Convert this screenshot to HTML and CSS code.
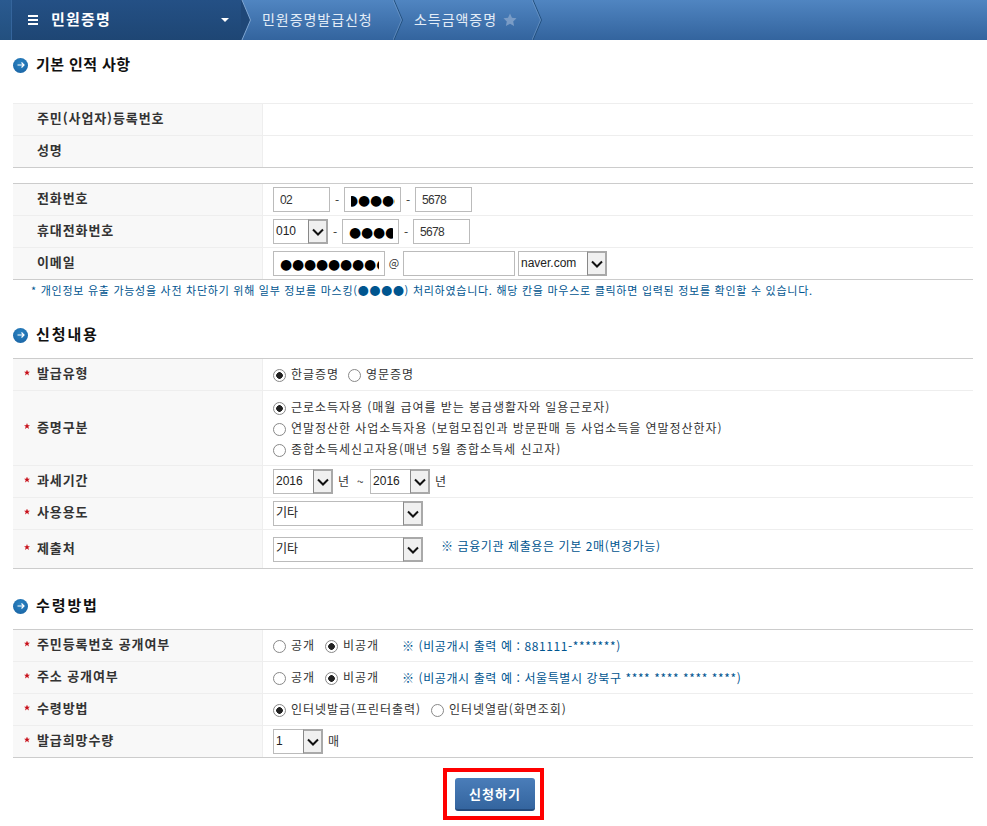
FILE: index.html
```html
<!DOCTYPE html>
<html lang="ko">
<head>
<meta charset="utf-8">
<title>소득금액증명</title>
<link rel="stylesheet" href="styles.css">
</head>
<body>
<header class="topbar">
  <div class="strip"></div>
  <div class="menu">
    <span class="burger"><i></i><i></i><i></i></span>
    <span class="menu-title">민원증명</span>
    <span class="caret"></span>
  </div>
  <svg class="tail" width="10" height="40" viewBox="0 0 10 40"><path d="M0 0H1L9.5 20L1 40H0Z" fill="#1f4777"/><path d="M1 0L9.5 20L1 40" fill="none" stroke="#7fa6d2"/></svg>
  <span class="crumb crumb-a">민원증명발급신청</span>
  <svg class="chev" width="10" height="40" viewBox="0 0 10 40"><path d="M1 0L9.5 20L1 40" fill="none" stroke="#23507f"/><path d="M0 0L8.5 20L0 40" fill="none" stroke="#7fa6d2" opacity=".5"/></svg>
  <span class="crumb crumb-b">소득금액증명</span>
  <svg class="star" width="14" height="14" viewBox="0 0 24 24"><path d="M12 1l3.4 7.2 7.8 1-5.7 5.4 1.5 7.8L12 18.6l-7 3.8 1.5-7.8L.8 9.2l7.8-1z" fill="#7a9cc6"/></svg>
  <svg class="chev chev-c" width="10" height="40" viewBox="0 0 10 40"><path d="M1 0L9.5 20L1 40" fill="none" stroke="#23507f"/><path d="M0 0L8.5 20L0 40" fill="none" stroke="#7fa6d2" opacity=".5"/></svg>
</header>

<main class="page">
  <h2 class="heading h-first"><span class="bullet"><svg width="8" height="8" viewBox="0 0 8 8"><path d="M0.5 4H7M4.5 1.5L7 4L4.5 6.5" fill="none" stroke="#fff" stroke-width="1.2"/></svg></span>기본 인적 사항</h2>
  <section class="table table-light">
    <div class="row"><div class="th">주민(사업자)등록번호</div><div class="td"></div></div>
    <div class="row"><div class="th">성명</div><div class="td"></div></div>
  </section>

  <section class="table t2">
    <div class="row"><div class="th">전화번호</div><div class="td">
      <input class="inp w57" value="02" readonly><span class="dash">-</span>
      <input class="inp w57 mask mask-l" value="●●●●●" readonly><span class="dash">-</span>
      <input class="inp w57" value="5678" readonly>
    </div></div>
    <div class="row"><div class="th">휴대전화번호</div><div class="td">
      <span class="sel w55"><span class="sel-text">010</span><span class="arrow"><svg width="12" height="8" viewBox="0 0 12 8"><path d="M1 1.5L6 6.5L11 1.5" fill="none" stroke="#111" stroke-width="2"/></svg></span></span><span class="dash">-</span>
      <input class="inp w57 mask" value="●●●●●" readonly><span class="dash">-</span>
      <input class="inp w57" value="5678" readonly>
    </div></div>
    <div class="row"><div class="th">이메일</div><div class="td">
      <input class="inp w112 mask" value="●●●●●●●●●●●" readonly><span class="at">@</span>
      <input class="inp w112" readonly>
      <span class="sel w89 ml3"><span class="sel-text">naver.com</span><span class="arrow"><svg width="12" height="8" viewBox="0 0 12 8"><path d="M1 1.5L6 6.5L11 1.5" fill="none" stroke="#111" stroke-width="2"/></svg></span></span>
    </div></div>
  </section>
  <p class="notice">* 개인정보 유출 가능성을 사전 차단하기 위해 일부 정보를 마스킹(●●●●) 처리하였습니다. 해당 칸을 마우스로 클릭하면 입력된 정보를 확인할 수 있습니다.</p>

  <h2 class="heading h-second"><span class="bullet"><svg width="8" height="8" viewBox="0 0 8 8"><path d="M0.5 4H7M4.5 1.5L7 4L4.5 6.5" fill="none" stroke="#fff" stroke-width="1.2"/></svg></span>신청내용</h2>
  <section class="table">
    <div class="row"><div class="th req">발급유형</div><div class="td">
      <label class="radio"><input type="radio" name="a" checked>한글증명</label>
      <label class="radio"><input type="radio" name="a">영문증명</label>
    </div></div>
    <div class="row row-tall"><div class="th req">증명구분</div><div class="td td-col">
      <label class="radio"><input type="radio" name="b" checked>근로소득자용 (매월 급여를 받는 봉급생활자와 일용근로자)</label>
      <label class="radio"><input type="radio" name="b">연말정산한 사업소득자용 (보험모집인과 방문판매 등 사업소득을 연말정산한자)</label>
      <label class="radio"><input type="radio" name="b">종합소득세신고자용(매년 5월 종합소득세 신고자)</label>
    </div></div>
    <div class="row"><div class="th req">과세기간</div><div class="td">
      <span class="sel w60"><span class="sel-text">2016</span><span class="arrow"><svg width="12" height="8" viewBox="0 0 12 8"><path d="M1 1.5L6 6.5L11 1.5" fill="none" stroke="#111" stroke-width="2"/></svg></span></span>
      <span class="unit">년</span><span class="tilde">~</span>
      <span class="sel w60"><span class="sel-text">2016</span><span class="arrow"><svg width="12" height="8" viewBox="0 0 12 8"><path d="M1 1.5L6 6.5L11 1.5" fill="none" stroke="#111" stroke-width="2"/></svg></span></span>
      <span class="unit">년</span>
    </div></div>
    <div class="row"><div class="th req">사용용도</div><div class="td">
      <span class="sel w150"><span class="sel-text">기타</span><span class="arrow"><svg width="12" height="8" viewBox="0 0 12 8"><path d="M1 1.5L6 6.5L11 1.5" fill="none" stroke="#111" stroke-width="2"/></svg></span></span>
    </div></div>
    <div class="row row-last"><div class="th req">제출처</div><div class="td td-top">
      <span class="sel w150"><span class="sel-text">기타</span><span class="arrow"><svg width="12" height="8" viewBox="0 0 12 8"><path d="M1 1.5L6 6.5L11 1.5" fill="none" stroke="#111" stroke-width="2"/></svg></span></span>
      <span class="hint hint-a">※ 금융기관 제출용은 기본 2매(변경가능)</span>
    </div></div>
  </section>

  <h2 class="heading h-third"><span class="bullet"><svg width="8" height="8" viewBox="0 0 8 8"><path d="M0.5 4H7M4.5 1.5L7 4L4.5 6.5" fill="none" stroke="#fff" stroke-width="1.2"/></svg></span>수령방법</h2>
  <section class="table">
    <div class="row"><div class="th req">주민등록번호 공개여부</div><div class="td">
      <label class="radio r-a"><input type="radio" name="c">공개</label>
      <label class="radio"><input type="radio" name="c" checked>비공개</label>
      <span class="hint hint-b">※ (비공개시 출력 예 : 881111-*******)</span>
    </div></div>
    <div class="row"><div class="th req">주소 공개여부</div><div class="td">
      <label class="radio r-a"><input type="radio" name="d">공개</label>
      <label class="radio"><input type="radio" name="d" checked>비공개</label>
      <span class="hint hint-b">※ (비공개시 출력 예 : 서울특별시 강북구 **** **** **** ****)</span>
    </div></div>
    <div class="row"><div class="th req">수령방법</div><div class="td">
      <label class="radio r-b"><input type="radio" name="e" checked>인터넷발급(프린터출력)</label>
      <label class="radio"><input type="radio" name="e">인터넷열람(화면조회)</label>
    </div></div>
    <div class="row"><div class="th req">발급희망수량</div><div class="td">
      <span class="sel w50"><span class="sel-text">1</span><span class="arrow"><svg width="12" height="8" viewBox="0 0 12 8"><path d="M1 1.5L6 6.5L11 1.5" fill="none" stroke="#111" stroke-width="2"/></svg></span></span>
      <span class="unit">매</span>
    </div></div>
  </section>

  <div class="actions">
    <div class="mark"><button class="submit" type="button">신청하기</button></div>
  </div>
</main>
</body>
</html>
```
FILE: styles.css
```css
* { box-sizing: border-box; }
html, body { margin: 0; padding: 0; background: #fff; }
body { font-family: "Noto Sans CJK KR", "Liberation Sans", sans-serif; font-size: 12px; color: #333; overflow: hidden; height: 826px; }

.topbar { display: flex; align-items: center; height: 40px; background: linear-gradient(#5085c1, #33649e); color: #fff; }
.strip { width: 12px; height: 40px; background: linear-gradient(#2a5a90, #23507f); border-right: 1px solid #35659c; flex: none; }
.menu { display: flex; align-items: center; width: 229px; height: 40px; background: #1f4777; background-image: linear-gradient(#245085, #1e4674); flex: none; }
.burger { display: flex; flex-direction: column; gap: 2px; width: 10px; margin-left: 16px; }
.burger i { display: block; height: 2px; background: #fff; }
.menu-title { margin-left: 13px; padding-bottom: 2px; font-size: 15px; font-weight: 700; letter-spacing: 1.2px; line-height: 20px; }
.caret { margin-left: auto; margin-right: 12px; width: 0; height: 0; border-left: 4px solid transparent; border-right: 4px solid transparent; border-top: 4px solid #fff; }
.tail { flex: none; }
.chev { flex: none; }
.crumb { padding-bottom: 2px; font-size: 14px; color: #e4edf7; letter-spacing: .95px; white-space: nowrap; line-height: 20px; }
.crumb-a { margin-left: 11px; width: 131px; }
.crumb-b { margin-left: 11px; width: 89px; }
.star { flex: none; }
.chev-c { margin-left: 15px; }

.page { padding: 0 14px 0 13px; }
.heading { display: flex; align-items: center; margin: 0; font-size: 15px; font-weight: 700; color: #111; letter-spacing: 1.9px; line-height: 20px; }
.h-first { padding-top: 14px; padding-bottom: 29px; letter-spacing: .4px; }
.h-second { padding-top: 24px; padding-bottom: 14px; }
.h-third { padding-top: 26px; padding-bottom: 14px; }
.bullet { display: flex; align-items: center; justify-content: center; width: 15px; height: 15px; margin-top: 2px; margin-right: 8px; border-radius: 50%; background: radial-gradient(circle at 50% 35%, #2c85c4, #175f9f); flex: none; }

.table { border-top: 1px solid #ccc; border-bottom: 1px solid #ccc; }
.table-light { border-top-color: #eee; }
.t2 { margin-top: 15px; }
.row { display: flex; height: 32px; border-bottom: 1px solid #eee; }
.row:last-child { border-bottom: 0; height: 31px; }
.row-tall { height: 75px; }
.row.row-last { height: 38px; }
.th { display: flex; align-items: center; width: 250px; padding-left: 24px; padding-bottom: 4px; background: #f8f8f8; border-right: 1px solid #eee; font-size: 13px; font-weight: 700; color: #333; letter-spacing: .9px; flex: none; }
.req { position: relative; }
.req::before { content: ""; position: absolute; left: 11px; top: 50%; width: 6px; height: 6px; margin-top: -5px; background: #c8101a; clip-path: polygon(50% 0, 64% 36%, 100% 38%, 72% 60%, 82% 100%, 50% 76%, 18% 100%, 28% 60%, 0 38%, 36% 36%); }
.td { display: flex; align-items: center; flex: 1; padding-left: 10px; font-size: 12px; color: #333; min-width: 0; }
.td-col { flex-direction: column; align-items: flex-start; justify-content: center; }
.td-col .radio { height: 21px; margin: 0; }
.td-top { align-items: flex-start; padding-top: 7px; }

.inp { height: 25px; padding: 0 6px; border: 1px solid #bbb; background: #fff; font-family: "Liberation Sans", sans-serif; font-size: 12px; letter-spacing: -.7px; color: #333; outline: 0; flex: none; }
.w57 { width: 57px; }
.w112 { width: 112px; }
.mask { padding-right: 5px; font-family: "DejaVu Sans", sans-serif; font-size: 14px; color: #000; letter-spacing: -.2px; }
.mask-l { text-indent: -5px; }
.dash { width: 14px; text-align: center; font-size: 12px; flex: none; color: #333; }
.at { width: 18px; padding-bottom: 3px; text-align: center; font-size: 11px; flex: none; }

.sel { display: flex; align-items: stretch; height: 25px; border: 1px solid #bbb; background: #fff; flex: none; }
.sel-text { flex: 1; padding-left: 2px; line-height: 23px; font-family: "Liberation Sans", "Noto Sans CJK KR", sans-serif; font-size: 12px; color: #222; overflow: hidden; }
.arrow { display: flex; align-items: center; justify-content: center; width: 20px; margin: -1px -1px -1px 0; background: #f0f0f0; border: 2px solid #a9a9a9; border-left-width: 1px; border-left-color: #888; flex: none; }
.w50 { width: 50px; }
.w55 { width: 55px; }
.w60 { width: 60px; }
.w89 { width: 89px; }
.w150 { width: 150px; }
.ml3 { margin-left: 3px; }
.unit { margin-left: 5px; padding-bottom: 3px; }
.tilde { margin: 0 6px 0 8px; width: 7px; padding-bottom: 3px; }

.radio { display: inline-flex; align-items: center; margin-right: 9px; padding-bottom: 2px; white-space: nowrap; letter-spacing: .95px; color: #333; }
.radio input { appearance: none; width: 13px; height: 13px; margin: 4px 5px 0 0; border: 1px solid #888; border-radius: 50%; background: #fff; flex: none; }
.radio input:checked { background: radial-gradient(circle, #222 0 3px, #fff 3.6px); }
.r-a { margin-right: 10px; }
.r-b { margin-right: 10px; }
.hint { padding-bottom: 1px; color: #00558f; letter-spacing: .6px; white-space: nowrap; }
.hint-a { margin-left: 18px; }
.hint-b { margin-left: 14px; }

.notice { margin: 0; padding: 2px 0 0 18px; height: 20px; font-size: 11px; line-height: 17px; color: #00558f; letter-spacing: .73px; white-space: nowrap; }

.actions { display: flex; justify-content: center; padding-top: 10px; padding-left: 1px; }
.mark { display: flex; border: 4px solid #f00; padding: 6px 5px 5px 8px; }
.submit { width: 80px; height: 33px; padding: 0; border: 0; border-bottom: 2px solid #234a7c; border-radius: 3px; background: linear-gradient(#4a7db9, #34659f); color: #fff; font-family: "Noto Sans CJK KR", sans-serif; font-size: 13px; font-weight: 700; letter-spacing: 1px; }
```
